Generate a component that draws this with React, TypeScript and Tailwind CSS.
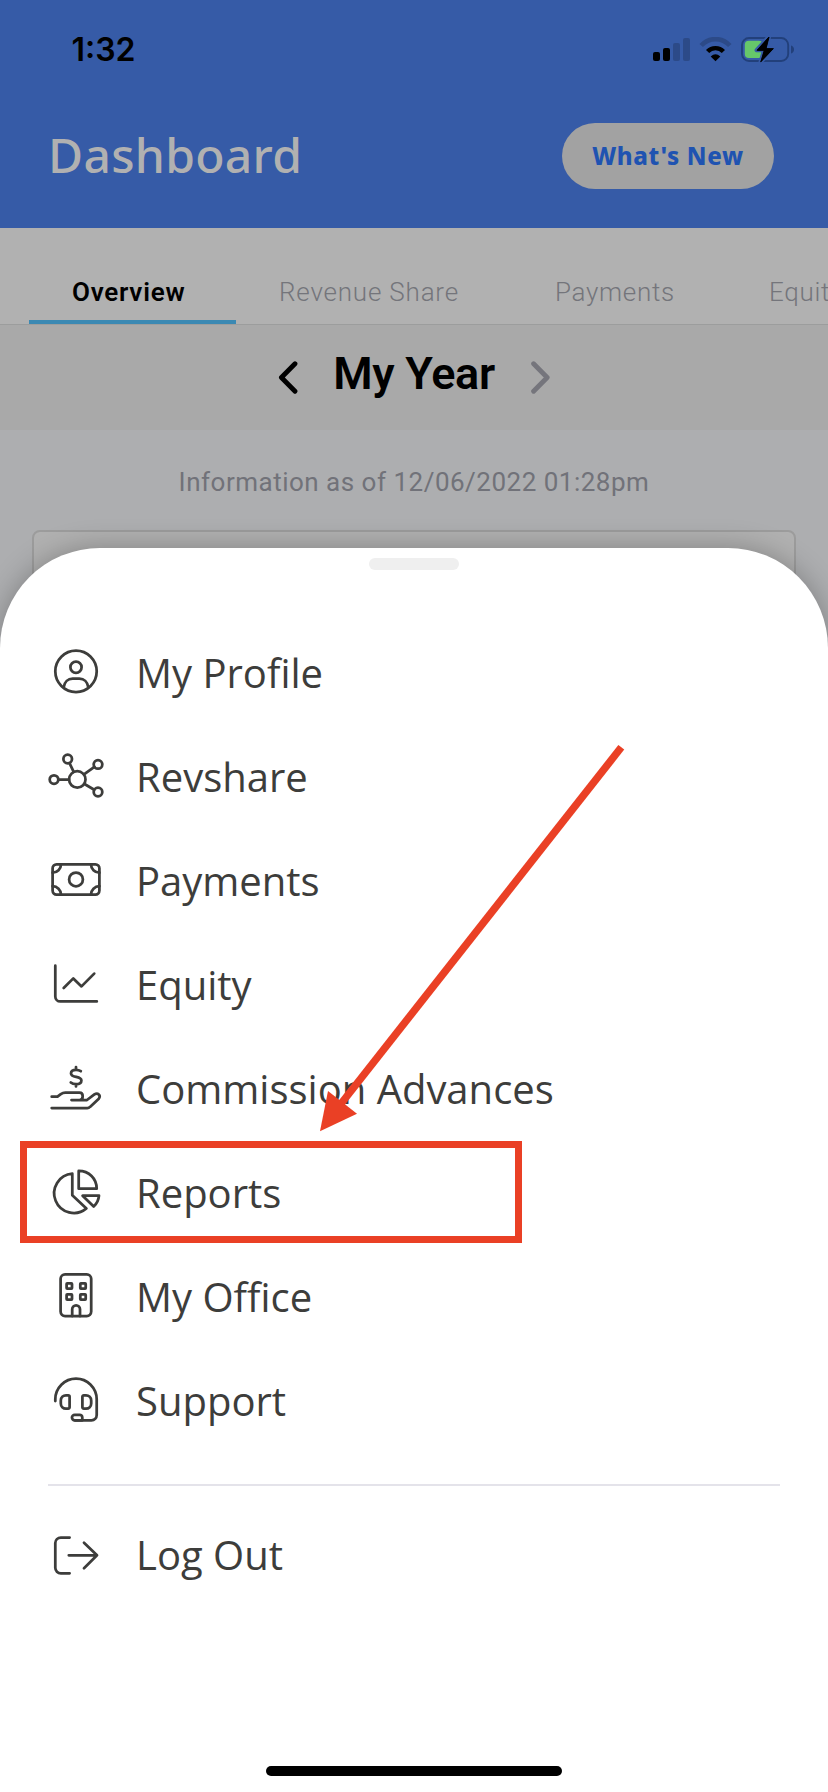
import type { ReactNode } from "react";

interface MenuItem {
    label: string;
    icon: ReactNode;
    highlighted?: boolean;
}

const menuItems: MenuItem[] = [
    {
        label: "My Profile",
        icon: (
            <>
                <circle cx="32" cy="31.3" r="20.7" />
                <circle cx="32" cy="27.3" r="5.6" />
                <path d="M19.7 47.3C20.5 42 24 38.7 28.6 38.7h6.8C40 38.7 43.5 42 44.3 47.3" />
            </>
        ),
    },
    {
        label: "Revshare",
        icon: (
            <>
                <circle cx="33.3" cy="35.4" r="8.2" />
                <circle cx="23.7" cy="15" r="4.3" />
                <circle cx="54" cy="20.4" r="4.3" />
                <circle cx="54" cy="48" r="4.3" />
                <circle cx="10" cy="35.6" r="4.3" />
                <path d="M25.5 19.2 29.7 27.8M50.4 22.9 40 30.3M50.2 45.8 40.5 40M14.5 35.6H25" />
            </>
        ),
    },
    {
        label: "Payments",
        icon: (
            <>
                <rect x="8.6" y="16.3" width="46.8" height="30.3" rx="4" />
                <circle cx="32" cy="31.4" r="6.9" />
                <path d="M17 16.3a8.4 8.4 0 0 1-8.4 8.4M47 16.3a8.4 8.4 0 0 0 8.4 8.4M17 46.6a8.4 8.4 0 0 0-8.4-8.4M47 46.6a8.4 8.4 0 0 1 8.4-8.4" />
            </>
        ),
    },
    {
        label: "Equity",
        icon: <path d="M11.3 13.7V44.4a5 5 0 0 0 5 5H52.8M19.7 36 29.3 26.4 37.5 34.4 50.2 21.6" />,
    },
    {
        label: "Commission Advances",
        icon: (
            <>
                <path d="M36.8 15.2C35.5 14.3 33.8 13.8 32 13.8c-3 0-5 1.3-5 3.6 0 4.6 10.4 2.5 10.4 7.1 0 2.4-2.2 3.7-5.3 3.7-2.2 0-4.2-.8-5.3-1.8M32 11v2.8M32 28.2v2.2" />
                <path d="M7.7 40.7h5.8l3.3-2.5c1.4-1 2.8-1.5 4.5-1.5h14.2c2 0 3.2 1.3 3.2 3.5 0 2.4-1.3 3.8-3.2 3.8h-8M35.5 44H43l7.4-5.6c3.4-2.2 6.8 1 4.4 4.3L46 50.9c-.8.8-1.7 1.1-2.7 1.1H7.7" />
            </>
        ),
    },
    {
        label: "Reports",
        highlighted: true,
        icon: (
            <>
                <path d="M28.3 13.7V35.3L42.4 48.4A19.65 19.65 0 1 1 28.3 13.7Z" />
                <path d="M34.7 10.9V28.7H52.7C52.7 18.5 45 10.9 34.7 10.9Z" />
                <path d="M38.6 35.7H55C54.6 40 52.8 43.8 49.7 46.5Z" />
            </>
        ),
    },
    {
        label: "My Office",
        icon: (
            <>
                <rect x="16.6" y="10.3" width="30.6" height="41.8" rx="4.5" />
                <rect x="22.6" y="19.3" width="5.4" height="5.4" rx="0.6" />
                <rect x="36.3" y="19.3" width="5.4" height="5.4" rx="0.6" />
                <rect x="22.6" y="30.3" width="5.4" height="5.4" rx="0.6" />
                <rect x="36.3" y="30.3" width="5.4" height="5.4" rx="0.6" />
                <path d="M28.2 52V45.2a3.9 3.9 0 0 1 7.8 0V52" />
            </>
        ),
    },
    {
        label: "Support",
        icon: (
            <>
                <path d="M11.3 33V31.3a20.7 20.7 0 0 1 41.4 0V47.1a5.2 5.2 0 0 1-5.2 5.2H31" />
                <path d="M24.2 27.3H22a5.2 5.2 0 0 0-5.2 5.2v3a5.2 5.2 0 0 0 5.2 5.2h2.2a1.4 1.4 0 0 0 1.4-1.4V28.7a1.4 1.4 0 0 0-1.4-1.4Z" />
                <path d="M39.8 27.3H42a5.2 5.2 0 0 1 5.2 5.2v3a5.2 5.2 0 0 1-5.2 5.2h-2.2a1.4 1.4 0 0 1-1.4-1.4V28.7a1.4 1.4 0 0 1 1.4-1.4Z" />
                <path d="M38.3 52.3V49.4a2.6 2.6 0 0 0-2.6-2.6H30.7a2.75 2.75 0 0 0 0 5.5H38.3" />
            </>
        ),
    },
];

const logOut: MenuItem = {
    label: "Log Out",
    icon: (
        <path d="M25.6 15.5H16.8a5.5 5.5 0 0 0-5.5 5.5V45.8a5.5 5.5 0 0 0 5.5 5.5h8.8M24.8 33.3H53M40 20.7 53 33.3 40 46.2" />
    ),
};

function MenuRow({ item }: { item: MenuItem }) {
    return (
        <li className="relative flex h-[104px] items-center gap-7 pl-11">
            <svg
                className="h-16 w-16 shrink-0"
                viewBox="0 0 64 64"
                fill="none"
                stroke="#3d3d3b"
                strokeWidth="2.75"
                strokeLinecap="round"
                strokeLinejoin="round"
            >
                {item.icon}
            </svg>
            <span className="pt-px font-['Open_Sans',sans-serif] text-[40px] leading-[55px] text-[#3d3d3b]">
                {item.label}
            </span>
            {item.highlighted && (
                <div className="absolute top-px left-5 h-[102px] w-[502px] border-[7px] border-[#ea4025]" />
            )}
        </li>
    );
}

function StatusIcons() {
    return (
        <svg className="h-[26px] w-[142px]" viewBox="0 0 142 26" fill="none">
            <rect x="0" y="15" width="7" height="9" rx="2" fill="#000" />
            <rect x="10" y="11" width="7" height="13" rx="2" fill="#000" />
            <rect x="20" y="6" width="7" height="18" rx="2" fill="#2c4a88" />
            <rect x="30" y="1" width="7" height="23" rx="2" fill="#2c4a88" />

            <path d="M48.2 8.6a19 19 0 0 1 28.6 0" stroke="#2c4a88" strokeWidth="4.6" />
            <path d="M54.6 14.6a10.8 10.8 0 0 1 15.8 0" stroke="#000" strokeWidth="4.4" />
            <path d="M57.7 19.4Q62.5 15.3 67.3 19.4L62.5 24.2Z" fill="#000" />

            <rect x="89" y="1" width="46.2" height="23" rx="7" stroke="#22407b" strokeWidth="1.9" />
            <path d="M138 8.6c1.9.6 3 2 3 4s-1.1 3.4-3 4Z" fill="#22407b" />
            <rect x="91.8" y="3.8" width="18" height="17.2" rx="4" fill="#66c86a" />
            <path
                d="M116.2-.8 103.6 13.2H111L107.4 25.4 120.8 11.6H113.4Z"
                fill="#000"
                stroke="#365ba7"
                strokeWidth="4"
                strokeLinejoin="round"
                paintOrder="stroke"
            />
            <path
                d="M116.2-.2 104.1 13.4H111.3L107.8 24.8 120.3 11.6H113Z"
                fill="#000"
                stroke="#000"
                strokeWidth="0.8"
                strokeLinejoin="round"
            />
        </svg>
    );
}

function Header() {
    return (
        <header className="h-[228px] bg-[#365ba7]">
            <div className="flex h-[100px] items-center justify-between pr-[33px] pl-[71.5px]">
                <span className="font-[Inter,sans-serif] text-[32px] leading-10 font-semibold text-black">
                    1:32
                </span>
                <StatusIcons />
            </div>
            <div className="flex h-28 items-center justify-between pr-[54px] pl-12">
                <h1 className="pb-[3px] font-['Noto_Sans',sans-serif] text-5xl leading-[66px] font-medium tracking-[0.3px] text-[#b1b1b1]">
                    Dashboard
                </h1>
                <button className="h-[66px] w-[212px] rounded-full bg-[#a2a2a2] pb-px font-['Noto_Sans',sans-serif] text-2xl font-extrabold tracking-[0.65px] text-[#1f53b1]">
                    What's New
                </button>
            </div>
        </header>
    );
}

function Tabs() {
    return (
        <nav className="flex h-[97px] overflow-hidden border-b border-[#9c9d9d] bg-[#b1b1b1] pl-[29px] font-[Roboto,sans-serif] text-[26px] leading-10 font-light whitespace-nowrap text-[#74757b]">
            <span className="w-[207px] shrink-0 border-b-4 border-[#3b89b3] pt-11 pl-[43px] font-semibold tracking-[0.75px] text-black">
                Overview
            </span>
            <span className="w-[276px] shrink-0 pt-11 pl-[43px] tracking-[0.8px]">Revenue Share</span>
            <span className="w-[214px] shrink-0 pt-11 pl-[43px] tracking-[0.7px]">Payments</span>
            <span className="shrink-0 pt-11 pl-[43px] tracking-[0.7px]">Equity</span>
        </nav>
    );
}

export default function App() {
    return (
        <div className="relative h-[1792px] w-[828px] overflow-hidden bg-[#adaeb0]">
            <Header />
            <Tabs />

            <div className="flex h-[105px] items-center justify-between bg-[#a9a9a9] px-[278px] font-[Roboto,sans-serif]">
                <svg className="h-9 w-5" viewBox="0 0 20 36" fill="none" stroke="#000" strokeWidth="4.8" strokeLinecap="round" strokeLinejoin="round">
                    <path d="M17 3.8 3.4 17.5 17 31.2" />
                </svg>
                <h2 className="pb-2 text-[45px] leading-[60px] font-semibold tracking-[-0.3px] text-black">
                    My Year
                </h2>
                <svg className="h-9 w-5" viewBox="0 0 20 36" fill="none" stroke="#75757c" strokeWidth="4.8" strokeLinecap="round" strokeLinejoin="round">
                    <path d="M3.6 3.8 17.2 17.5 3.6 31.2" />
                </svg>
            </div>

            <p className="pt-8 text-center font-[Roboto,sans-serif] text-[26px] leading-10 tracking-[0.5px] text-[#717279]">
                Information as of 12/06/2022 01:28pm
            </p>
            <div className="mx-8 mt-7 h-[200px] rounded-lg border-2 border-[#9c9c9c] bg-[#b1b1b1]" />

            {/* menu sheet */}
            <div className="absolute inset-x-0 top-[548px] bottom-0 flex flex-col rounded-t-[100px] bg-white shadow-[0_0_28px_rgba(0,0,0,0.27)]">
                <div className="mx-auto mt-2.5 h-3 w-[90px] shrink-0 rounded-full bg-[#efefef]" />
                <ul className="mt-[50px]">
                    {menuItems.map((item) => (
                        <MenuRow key={item.label} item={item} />
                    ))}
                </ul>
                <div className="mx-12 mt-8 h-0.5 shrink-0 bg-[#e4e3ea]" />
                <ul className="mt-4">
                    <MenuRow item={logOut} />
                </ul>
                <div className="mx-auto mt-auto mb-4 h-2.5 w-[296px] shrink-0 rounded-full bg-black" />
            </div>

            {/* arrow pointing at the reports row */}
            <svg className="absolute top-[740px] left-[310px] h-[400px] w-[320px]" viewBox="310 740 320 400" fill="#ea4025">
                <path d="M621.3 747.3 340 1105" stroke="#ea4025" strokeWidth="7.5" />
                <path d="M320 1131.2 328 1091 357 1113.7Z" />
            </svg>
        </div>
    );
}
